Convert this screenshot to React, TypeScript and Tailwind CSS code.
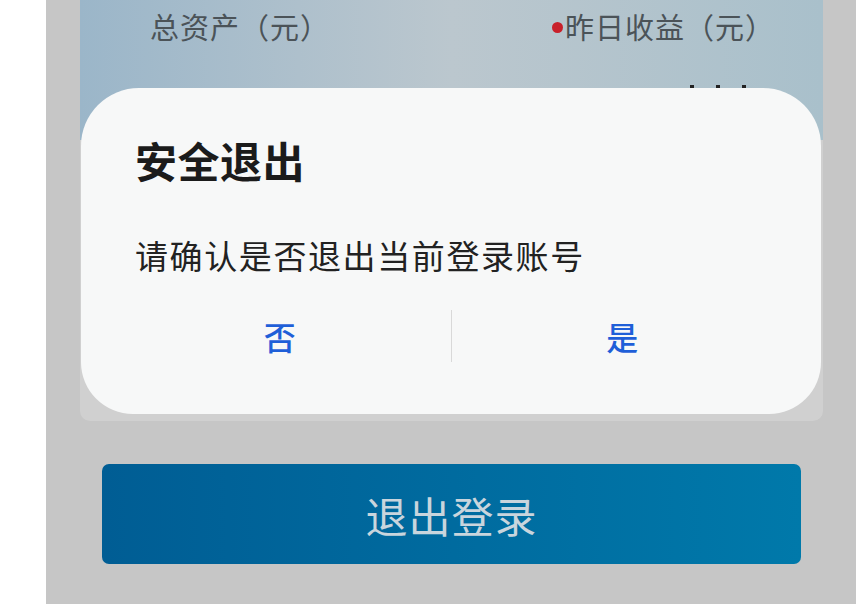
import React from 'react';

const cjk = { fontFamily: '"Noto Sans CJK SC", "Noto Sans", sans-serif' };

const LogoutDialog: React.FC<{ onCancel?: () => void; onConfirm?: () => void }> = ({ onCancel, onConfirm }) => (
  <div className="absolute left-[1px] right-[2px] top-[88px] bottom-[7px] bg-[#f7f8f8] rounded-t-[58px] rounded-b-[52px] flex flex-col px-[54px]">
    <h2 className="mt-[50px] text-[42px] leading-[44px] font-bold text-[#1b1b1b] tracking-[0.5px]">安全退出</h2>
    <p className="mt-[53px] text-[33px] leading-[40px] text-[#222] tracking-[1.6px]">请确认是否退出当前登录账号</p>
    <div className="mt-[35px] flex items-center h-[52px] -mx-[54px]">
      <button onClick={onCancel} className="flex-1 text-[32px] font-medium text-[#1f5fd8] pl-[28px]">否</button>
      <div className="w-px h-[52px] bg-[#d9d9d9]" />
      <button onClick={onConfirm} className="flex-1 text-[32px] font-medium text-[#1f5fd8] pr-[28px]">是</button>
    </div>
  </div>
);

export default function App() {
  return (
    <div className="flex w-[856px] h-[604px] overflow-hidden" style={cjk}>
      <div className="w-[46px] bg-white" />
      <div className="flex-1 bg-[#c6c6c6] pl-[34px] pr-[33px] flex flex-col">
        {/* asset card, dimmed behind the dialog */}
        <div className="relative h-[421px] rounded-b-[10px] bg-[#d0d0d0] overflow-hidden">
          <div className="h-[140px] bg-gradient-to-r from-[#9bb6c9] via-[#bbc7ce] to-[#a9c0cb]">
            <div className="flex justify-between items-center h-[54px] pl-[70px] pr-[48px] text-[29px] text-[#4b5358]">
              <span className="tracking-[1px]">总资产（元）</span>
              <span className="flex items-center tracking-[1px]">
                <span className="w-[11px] h-[11px] rounded-full bg-[#c8202a] mr-[2px]" />
                昨日收益（元）
              </span>
            </div>
            <div className="flex justify-end gap-[22px] pr-[77px] mt-[31px]">
              <span className="w-[4px] h-[3px] bg-[#222]" />
              <span className="w-[4px] h-[3px] bg-[#222]" />
              <span className="w-[4px] h-[3px] bg-[#222]" />
            </div>
          </div>
          <LogoutDialog />
        </div>

        <button className="mt-[43px] mx-[22px] h-[100px] rounded-[7px] bg-gradient-to-r from-[#005d94] to-[#0079aa] text-[42px] text-[#c9d5dd] tracking-[1px]">
          退出登录
        </button>
      </div>
    </div>
  );
}
